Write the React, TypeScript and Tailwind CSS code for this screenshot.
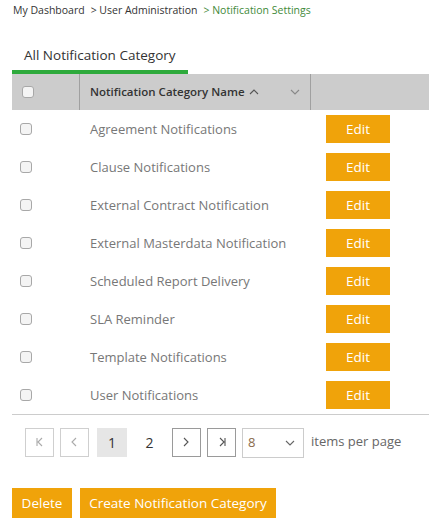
import type { FC } from 'react';

const rows = [
  'Agreement Notifications',
  'Clause Notifications',
  'External Contract Notification',
  'External Masterdata Notification',
  'Scheduled Report Delivery',
  'SLA Reminder',
  'Template Notifications',
  'User Notifications',
];

const Box: FC = () => (
  <span className="block h-[12px] w-[12px] rounded-[3px] border border-[#a8a8a8] bg-[#f4f4f4]" />
);

const Chevron: FC<{ dir: 'left' | 'right' | 'down' | 'up' }> = ({ dir }) => {
  const d = {
    left: 'M6 1 L2 5 L6 9',
    right: 'M2 1 L6 5 L2 9',
    down: 'M1 3 L5 7 L9 3',
    up: 'M1 7 L5 3 L9 7',
  }[dir];
  return (
    <svg width="10" height="10" viewBox="0 0 10 10" fill="none" stroke="currentColor" strokeWidth="1.1">
      <path d={d} />
    </svg>
  );
};

const PageBtn: FC<{ children: React.ReactNode; enabled?: boolean }> = ({ children, enabled }) => (
  <div
    className={`flex h-[29px] w-[29px] items-center justify-center border ${
      enabled ? 'border-[#9a9a9a] text-[#555]' : 'border-[#cfcfcf] text-[#aaa]'
    }`}
  >
    {children}
  </div>
);

export default function App() {
  return (
    <div className="h-[525px] w-[429px] overflow-hidden bg-white font-['Open_Sans',sans-serif]">
      <div className="flex gap-[6px] pl-[13px] pt-[2px] text-[10.5px] leading-[16px] text-[#333]">
        <span>My Dashboard</span>
        <span>&gt; User Administration</span>
        <span className="text-[#3f8a3a]">&gt; Notification Settings</span>
      </div>

      <div className="mt-[27px] pl-[12px]">
        <div className="w-[176px] border-b-[4px] border-[#2eaa3c] pb-[5px] pl-[12px] text-[13.5px] leading-[20px] text-[#333]">
          All Notification Category
        </div>
      </div>

      <div className="pl-[12px]">
        <div className="flex h-[36px] items-center bg-[#cccccc]">
          <div className="flex h-full w-[68px] items-center border-r border-[#a0a0a0] pl-[10px]">
            <Box />
          </div>
          <div className="flex h-full w-[231px] items-center justify-between border-r border-[#a0a0a0] pl-[10px] pr-[10px]">
            <span className="flex items-center gap-[4px] text-[11.5px] font-semibold text-[#333]">
              Notification Category Name
              <span className="text-[#555]">
                <Chevron dir="up" />
              </span>
            </span>
            <span className="text-[#888]">
              <Chevron dir="down" />
            </span>
          </div>
        </div>

        {rows.map((r) => (
          <div key={r} className="flex h-[38px] items-center">
            <div className="w-[78px] pl-[8px]">
              <Box />
            </div>
            <div className="w-[236px] pt-[2px] text-[13px] text-[#777]">{r}</div>
            <div className="flex h-[28px] w-[64px] items-center justify-center bg-[#f0a30a] text-[13.5px] text-white">
              Edit
            </div>
          </div>
        ))}

        <div className="border-t border-[#cccccc]" />

        <div className="mt-[11px] flex items-center pl-[13px]">
          <PageBtn>
            <svg width="10" height="10" viewBox="0 0 10 10" fill="none" stroke="currentColor" strokeWidth="1.1">
              <path d="M2 1 V9 M7 1 L3 5 L7 9" />
            </svg>
          </PageBtn>
          <div className="ml-[6px]">
            <PageBtn>
              <Chevron dir="left" />
            </PageBtn>
          </div>
          <div className="ml-[8px] flex h-[29px] w-[30px] items-center justify-center bg-[#e6e6e6] text-[14px] text-[#333]">
            1
          </div>
          <div className="ml-[8px] flex h-[29px] w-[29px] items-center justify-center text-[14px] text-[#333]">
            2
          </div>
          <div className="ml-[8px]">
            <PageBtn enabled>
              <Chevron dir="right" />
            </PageBtn>
          </div>
          <div className="ml-[6px]">
            <PageBtn enabled>
              <svg width="10" height="10" viewBox="0 0 10 10" fill="none" stroke="currentColor" strokeWidth="1.1">
                <path d="M3 1 L7 5 L3 9 M8 1 V9" />
              </svg>
            </PageBtn>
          </div>
          <div className="ml-[6px] mt-[2px] flex h-[30px] w-[62px] items-center justify-between border border-[#cccccc] pl-[5px] pr-[8px] text-[13px] text-[#8a6a4a]">
            <span>8</span>
            <span className="text-[#666]">
              <Chevron dir="down" />
            </span>
          </div>
          <span className="ml-[7px] text-[13px] text-[#666]">items per page</span>
        </div>

        <div className="mt-[30px] flex gap-[8px]">
          <div className="flex h-[30px] w-[60px] items-center justify-center bg-[#f0a30a] text-[13.5px] text-white">
            Delete
          </div>
          <div className="flex h-[30px] w-[196px] items-center justify-center bg-[#f0a30a] text-[13.5px] text-white">
            Create Notification Category
          </div>
        </div>
      </div>
    </div>
  );
}
